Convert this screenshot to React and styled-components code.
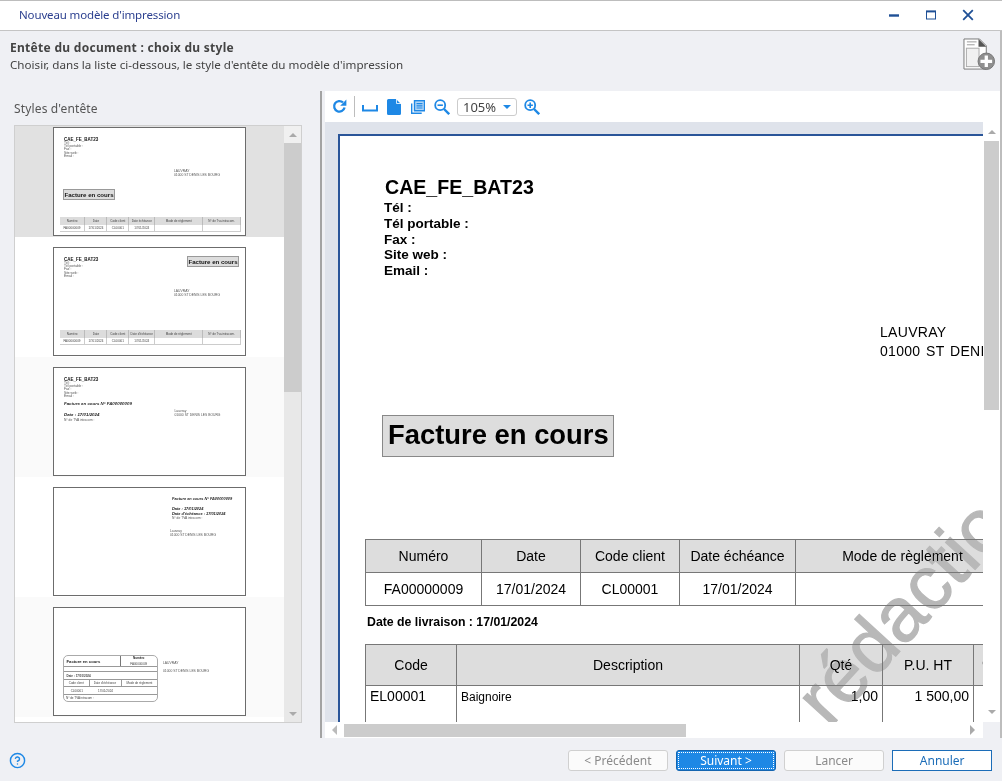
import React from 'react';
import styled, { createGlobalStyle } from 'styled-components';
import { CircleHelp } from 'lucide-react';

const UI = '"Noto Sans", "Liberation Sans", sans-serif';
const DOC = '"Liberation Sans", Arial, sans-serif';
const BLUE = '#1e88e5';

const Global = createGlobalStyle`
  html, body { margin: 0; padding: 0; background: #fff; overflow: hidden; }
  * { box-sizing: border-box; }
`;

const Window = styled.div`
  width: 1003px; height: 781px; display: flex; flex-direction: column;
  font-family: ${UI}; font-size: 12px; color: #444; background: #eff0f4;
  border-right: 1px solid #fff; overflow: hidden;
`;
const TitleBar = styled.div`
  height: 31px; flex: none; display: flex; align-items: center; background: #fff;
  border-top: 1px solid #bdbdbd; border-bottom: 1px solid #c4c4c4; padding-left: 19px;
`;
const TitleText = styled.span`
  color: #2b3f8f; font-size: 11.5px; letter-spacing: -0.14px; flex: 1; margin-top: -3px;
`;
const WinControls = styled.div`
  display: flex; align-items: center; margin-right: 28px;
`;
const WinIcon = styled.svg`
  width: 12px; height: 12px; margin-left: 25px; display: block; margin-top: -1px;
`;
const Header = styled.div`
  height: 60px; flex: none; display: flex; justify-content: space-between; padding: 8px 4px 0 10px;
  border-right: 2px solid #bdbdbd;
`;
const HeaderTitle = styled.div` font-weight: 700; font-size: 12px; letter-spacing: .29px; line-height: 18px; color: #444; `;
const HeaderSub = styled.div` font-size: 11.65px; line-height: 18px; margin-top: -1px; color: #444; `;
const HeaderIcon = styled.svg` display: block; margin-top: -1px; flex: none; `;
const Main = styled.div` flex: 1; min-height: 0; display: flex; border-right: 2px solid #bdbdbd; `;
const LeftPane = styled.div` width: 320px; flex: none; padding: 9px 0 0 14px; display: flex; flex-direction: column; `;
const PaneLabel = styled.div` font-size: 12px; letter-spacing: .15px; line-height: 18px; color: #555; margin-bottom: 7px; `;
const ListBox = styled.div`
  width: 288px; height: 598px; border: 1px solid #cfcfcf; display: flex; background: #fff; flex: none;
`;
const ListItems = styled.div` flex: 1; overflow: hidden; `;
const ListStack = styled.div` margin-top: -9px; `;
const Item = styled.div`
  height: 120px; padding-top: 10px; display: flex; justify-content: center;
  background: ${p => p.$selected ? '#e1e1e1' : p.$alt ? '#fafafa' : '#fff'};
`;
const Thumb = styled.div`
  width: 193px; height: 109px; background: #fff; border: 1px solid #6c6c6c; overflow: hidden;
  font-family: ${DOC}; color: #333; display: flex; flex-direction: column;
`;
const ThumbInner = styled.div` filter: blur(0.5px); display: flex; flex-direction: column; flex: 1; `;
const MiniHead = styled.div` margin-left: 10px; flex: none; `;
const MiniTitle = styled.div` margin-top: 8.5px; font-size: 4.5px; font-weight: 700; line-height: 5px; color: #111; `;
const MiniLine = styled.div` font-size: 3.3px; line-height: 3.4px; color: #555; `;
const MiniRow = styled.div` display: flex; `;
const MiniAddress = styled.div`
  margin-left: ${p => p.$left}px; margin-top: ${p => p.$top}px; font-size: 3.35px; line-height: ${p => p.$lh || 4.2}px; color: #555; white-space: nowrap;
`;
const MiniBox = styled.div`
  margin-top: ${p => p.$top}px; margin-left: ${p => p.$left}px; width: 52px; height: 11px; background: #ddd; border: 0.7px solid #999; flex: none;
  font-size: 6.1px; font-weight: 700; line-height: 9.5px; text-align: center; color: #111; white-space: nowrap;
`;
const CornerBox = styled(MiniBox)` margin-left: auto; margin-right: 6px; `;
const MiniTable = styled.div`
  margin-top: ${p => p.$top}px; margin-left: 5.5px; width: 181.5px; display: grid;
  grid-template-columns: 26fr 22fr 22fr 26fr 48fr 38fr; font-size: 3px; color: #444; text-align: center;
`;
const MiniHeadCell = styled.div` background: #dcdcdc; height: 8px; line-height: 8px; border-right: .5px solid #bbb; white-space: nowrap; overflow: hidden; `;
const MiniCell = styled.div` height: 7px; line-height: 6.5px; border-right: .5px solid #ccc; border-bottom: .5px solid #ccc; white-space: nowrap; `;
const MiniItalic = styled.div`
  margin-top: ${p => p.$top}px; margin-left: ${p => p.$left}px; font-size: ${p => p.$size || 4.4}px; line-height: 5px;
  font-weight: 700; font-style: italic; color: #222; white-space: nowrap;
`;
const MiniVat = styled.div`
  margin-top: ${p => p.$top}px; margin-left: ${p => p.$left}px; font-size: 3.3px; line-height: 3.5px; color: #555; white-space: nowrap;
`;
const MiniCard = styled.div`
  margin: 47px 0 0 9px; width: 94.5px; height: 47px; border: .8px solid #aaa; border-radius: 5px; overflow: hidden; flex: none;
  display: flex; flex-direction: column; font-size: 3px; color: #444;
`;
const CardRow = styled.div`
  height: ${p => p.$h}px; flex: none; display: flex; border-bottom: .7px solid #999; line-height: ${p => p.$h}px; padding-left: ${p => p.$pad || 0}px; font-weight: ${p => p.$bold ? 700 : 400}; white-space: nowrap;
`;
const CardCell = styled.div`
  width: ${p => p.$w}px; flex: none; text-align: center; border-right: ${p => p.$line ? '.7px solid #999' : '0'};
`;
const CardTitle = styled.div` width: 57px; flex: none; font-size: 4.2px; font-weight: 700; color: #222; padding-left: 2.5px; border-right: .7px solid #777; `;
const CardNum = styled.div` flex: 1; text-align: center; display: flex; flex-direction: column; line-height: 5.5px; `;
const CardNumHead = styled.b` color: #222; `;
const ScrollV = styled.div`
  width: ${p => p.$w || 17}px; flex: none; background: ${p => p.$track}; display: flex; flex-direction: column; align-items: center;
`;
const ScrollBtn = styled.div`
  height: ${p => p.$h || 17}px; width: ${p => p.$w || '100%'}; flex: none; display: flex; align-items: center; justify-content: center; background: ${p => p.$bg || 'transparent'};
`;
const ArrowUp = styled.div` width: 0; height: 0; border: 4px solid transparent; border-top: 0; border-bottom: 4px solid #aaa; `;
const ArrowDown = styled.div` width: 0; height: 0; border: 4px solid transparent; border-bottom: 0; border-top: 4px solid #aaa; `;
const ArrowLeft = styled.div` width: 0; height: 0; border: 5px solid transparent; border-left: 0; border-right: 5px solid #bbb; `;
const ArrowRight = styled.div` width: 0; height: 0; border: 5px solid transparent; border-right: 0; border-left: 5px solid #aaa; `;
const ThumbV = styled.div` height: ${p => p.$h}px; width: ${p => p.$w || '100%'}; background: #ccc; flex: none; `;
const Spacer = styled.div` flex: 1; `;
const Splitter = styled.div` width: 2px; flex: none; background: #a3a3a3; `;
const RightPane = styled.div` flex: 1; min-width: 0; margin-left: 3px; display: flex; flex-direction: column; `;
const Toolbar = styled.div`
  height: 31px; flex: none; background: #fff; display: flex; align-items: center; padding-left: 7px;
`;
const ToolIcon = styled.svg`
  display: block; flex: none; margin-left: ${p => p.$gap || 0}px; margin-top: ${p => p.$drop || 0}px; color: ${BLUE};
`;
const ToolSep = styled.div` width: 1px; height: 21px; background: #bdbdbd; margin-left: 7px; `;
const Combo = styled.div`
  width: 60px; height: 18px; margin-left: 7px; border: 1px solid #ccc; border-radius: 3px; display: flex; align-items: center; justify-content: space-between;
  padding: 0 5px; font-size: 13px; color: #444; flex: none; background: #fff;
`;
const ComboArrow = styled.div` width: 0; height: 0; border: 4px solid transparent; border-bottom: 0; border-top: 4px solid ${BLUE}; `;
const PreviewGrid = styled.div`
  flex: 1; min-height: 0; display: grid; grid-template-columns: 658px 17px; grid-template-rows: 600px 16px; background: #fff;
`;
const Canvas = styled.div` background: #dfe3eb; overflow: hidden; padding: 12px 0 0 13px; `;
const Page = styled.div`
  position: relative; width: 860px; height: 900px; background: #fff; border-top: 2px solid #2a5599; border-left: 2px solid #2a5599; font-family: ${DOC}; color: #000; padding-left: 44px;
`;
const DocTitle = styled.div` margin-top: 40px; margin-left: 1px; font-size: 19.6px; font-weight: 700; line-height: 22px; `;
const DocInfo = styled.div` font-size: 13.5px; font-weight: 700; line-height: 15.75px; margin-top: 2px; `;
const DocAddress = styled.div` margin: 44.5px 0 0 496px; font-size: 14px; letter-spacing: .3px; word-spacing: 1.5px; line-height: 19px; white-space: nowrap; `;
const DocBadge = styled.div`
  margin: 54px 0 0 -2px; width: 232px; height: 42px; background: #ddd; border: 1px solid #888; font-size: 27.4px; font-weight: 700; line-height: 38px; padding-left: 5px; white-space: nowrap;
`;
const DocTable = styled.table`
  margin: ${p => p.$top}px 0 0 -19px; border-collapse: collapse; table-layout: fixed; font-size: 14px;
  width: ${p => p.$width}px;
`;
const Th = styled.th`
  background: #ddd; border: 1px solid #777; font-weight: 400; height: ${p => p.$h}px; padding: 0; white-space: nowrap;
`;
const Td = styled.td`
  border: 1px solid #777; height: ${p => p.$h}px; padding: ${p => p.$pad || '0'}; text-align: ${p => p.$align || 'center'}; vertical-align: ${p => p.$valign || 'middle'}; font-size: ${p => p.$size || 14}px; white-space: nowrap;
`;
const Delivery = styled.div` margin: 8px 0 0 -17px; font-size: 12.3px; font-weight: 700; line-height: 16px; `;
const Watermark = styled.div`
  position: absolute; left: 498px; top: 525px; transform: rotate(-47.5deg); transform-origin: 0 100%;
  font-size: 76px; line-height: 76px; color: #b8b8b8; mix-blend-mode: darken; -webkit-text-stroke: 1.2px #b8b8b8; white-space: nowrap; pointer-events: none;
`;
const ScrollH = styled.div` background: #fff; display: flex; align-items: center; `;
const Corner = styled.div` background: #eff0f4; `;
const Footer = styled.div`
  height: 43px; flex: none; display: flex; align-items: center; padding: 1px 10px 0 9px; gap: 8.5px;
`;
const Btn = styled.button`
  width: 99.6px; height: 21px; padding: 0; font-family: ${UI}; font-size: 12px; border-radius: 3px; cursor: default;
  background: ${p => p.$primary ? BLUE : '#fbfbfb'};
  color: ${p => p.$primary ? '#fff' : p.$cancel ? '#1c6db8' : '#8a8a8a'};
  border: 1px solid ${p => p.$primary ? '#1565b0' : p.$cancel ? '#1c6db8' : '#d0d0d0'};
  outline: ${p => p.$primary ? '1px dotted #fff' : 'none'}; outline-offset: -3px;
  ${p => p.$cancel ? 'background:#fff; border-width: 1px 1.5px 1.5px 1px; border-radius: 0;' : ''}
`;

const Head = () => (
  <MiniHead>
    <MiniTitle>CAE_FE_BAT23</MiniTitle>
    <MiniLine>Tél :</MiniLine>
    <MiniLine>Tél portable :</MiniLine>
    <MiniLine>Fax :</MiniLine>
    <MiniLine>Site web :</MiniLine>
    <MiniLine>Email :</MiniLine>
  </MiniHead>
);
const Addr = ({ left, top, lh, low }) => (
  <MiniAddress $left={left} $top={top} $lh={lh}>
    {low ? 'Lauvray' : 'LAUVRAY'}<br />01000 ST DENIS LES BOURG
  </MiniAddress>
);
const Tbl = ({ top, narrow }) => (
  <MiniTable $top={top}>
    {['Numéro', 'Date', 'Code client', narrow ? "Date d'échéance" : 'Date échéance', 'Mode de règlement', 'N° de Tva intracom.'].map(t => <MiniHeadCell key={t}>{t}</MiniHeadCell>)}
    {['FA00000009', '17/01/2024', 'CL00001', '17/01/2024', '', ''].map((t, i) => <MiniCell key={i}>{t}</MiniCell>)}
  </MiniTable>
);

const Page1 = () => (<ThumbInner><Head /><Addr left={120} top={10.4} /><MiniBox $top={11.6} $left={9}>Facture en cours</MiniBox><Tbl top={17} /></ThumbInner>);
const Page2 = () => (
  <ThumbInner>
    <MiniRow><Head /><CornerBox $top={8}>Facture en cours</CornerBox></MiniRow>
    <Addr left={120} top={10.4} />
    <Tbl top={32.6} narrow />
  </ThumbInner>
);
const Page3 = () => (
  <ThumbInner>
    <Head />
    <MiniItalic $top={2.2} $left={10}>Facture en cours N° FA00000009</MiniItalic>
    <MiniRow>
      <div>
        <MiniItalic $top={6.4} $left={10}>Date : 17/01/2024</MiniItalic>
        <MiniVat $top={1.8} $left={10}>N° de TVA intracom :</MiniVat>
      </div>
      <Addr left={75} top={3.2} low />
    </MiniRow>
  </ThumbInner>
);
const Page4 = () => (
  <ThumbInner>
    <MiniItalic $top={7.8} $left={118} $size={3.9}>Facture en cours N° FA00000009</MiniItalic>
    <MiniItalic $top={5.7} $left={118} $size={3.9}>Date : 17/01/2024</MiniItalic>
    <MiniItalic $top={0} $left={118} $size={3.9}>Date d'échéance : 17/01/2024</MiniItalic>
    <MiniVat $top={1} $left={118}>N° de TVA intracom :</MiniVat>
    <Addr left={116} top={8} low />
  </ThumbInner>
);
const Page5 = () => (
  <ThumbInner>
    <MiniRow>
      <MiniCard>
        <CardRow $h={11}>
          <CardTitle>Facture en cours</CardTitle>
          <CardNum><CardNumHead>Numéro</CardNumHead><span>FA00000009</span></CardNum>
        </CardRow>
        <CardRow $h={5} />
        <CardRow $h={8} $pad={2.5} $bold>Date : 17/01/2024</CardRow>
        <CardRow $h={7}>
          <CardCell $w={25.5} $line>Code client</CardCell>
          <CardCell $w={32} $line>Date d'échéance</CardCell>
          <CardCell $w={36}>Mode de règlement</CardCell>
        </CardRow>
        <CardRow $h={8}>
          <CardCell $w={25.5}>CL00001</CardCell>
          <CardCell $w={32}>17/01/2024</CardCell>
        </CardRow>
        <CardRow $h={7} $pad={2}>N° de TVA intracom :</CardRow>
      </MiniCard>
      <MiniAddress $left={5.5} $top={52} $lh={7.7}>LAUVRAY<br />01000 ST DENIS LES BOURG</MiniAddress>
    </MiniRow>
  </ThumbInner>
);

const DocIcon = () => (
  <HeaderIcon width="33" height="33" viewBox="0 0 34 34" fill="none">
    <path d="M1 1h16l7 7v24H1z" fill="#fff" stroke="#777" strokeWidth="1" />
    <path d="M16 1l8 8h-8z" fill="#555" />
    <path d="M4 4h10M4 7h8" stroke="#999" strokeWidth="1" />
    <rect x="3.5" y="10.5" width="13" height="19" fill="#f1f1f1" stroke="#aaa" />
    <circle cx="24" cy="24" r="8.5" fill="#8f8f8f" stroke="#777" />
    <path d="M24 18v12M18 24h12" stroke="#fff" strokeWidth="3.4" />
  </HeaderIcon>
);

export default function App() {
  return (
    <Window>
      <Global />
      <TitleBar>
        <TitleText>Nouveau modèle d'impression</TitleText>
        <WinControls>
          <WinIcon viewBox="0 0 12 12"><path d="M1 6.5h10" stroke="#1f5096" strokeWidth="2.4" /></WinIcon>
          <WinIcon viewBox="0 0 12 12"><rect x="1.5" y="2" width="9" height="8" fill="none" stroke="#1f5096" /><path d="M1 2.6h10" stroke="#1f5096" strokeWidth="1.6" /></WinIcon>
          <WinIcon viewBox="0 0 12 12"><path d="M1.2 1.2l9.6 9.6M10.8 1.2l-9.6 9.6" stroke="#1f5096" strokeWidth="1.8" /></WinIcon>
        </WinControls>
      </TitleBar>
      <Header>
        <div>
          <HeaderTitle>Entête du document : choix du style</HeaderTitle>
          <HeaderSub>Choisir, dans la liste ci-dessous, le style d'entête du modèle d'impression</HeaderSub>
        </div>
        <DocIcon />
      </Header>
      <Main>
        <LeftPane>
          <PaneLabel>Styles d'entête</PaneLabel>
          <ListBox>
            <ListItems>
              <ListStack>
                <Item $selected><Thumb><Page1 /></Thumb></Item>
                <Item><Thumb><Page2 /></Thumb></Item>
                <Item $alt><Thumb><Page3 /></Thumb></Item>
                <Item><Thumb><Page4 /></Thumb></Item>
                <Item $alt><Thumb><Page5 /></Thumb></Item>
              </ListStack>
            </ListItems>
            <ScrollV $track="#e8e8e8">
              <ScrollBtn $bg="#f0f0f0"><ArrowUp /></ScrollBtn>
              <ThumbV $h={249} />
              <Spacer />
              <ScrollBtn><ArrowDown /></ScrollBtn>
            </ScrollV>
          </ListBox>
        </LeftPane>
        <Splitter />
        <RightPane>
          <Toolbar>
            <ToolIcon width="15" height="15" viewBox="0 0 15 15" fill="none"><path d="M12.6 8.6A5.3 5.3 0 1 1 11 3.4" stroke="currentColor" strokeWidth="2.3" /><path d="M14.4 0.6v6.2H8.2z" fill="currentColor" /></ToolIcon>
            <ToolSep />
            <ToolIcon $gap={7} $drop={2} width="16" height="8" viewBox="0 0 16 8" fill="none"><path d="M1 1v5.5h14V1" stroke="currentColor" strokeWidth="2" /></ToolIcon>
            <ToolIcon $gap={9} width="14" height="16" viewBox="0 0 14 16"><path d="M1.5 0H9l5 5v9.5a1.5 1.5 0 0 1-1.5 1.5h-11A1.5 1.5 0 0 1 0 14.5v-13A1.5 1.5 0 0 1 1.5 0z" fill="currentColor" /><path d="M9.5 0v4.5H14" fill="none" stroke="#fff" strokeWidth=".8" /></ToolIcon>
            <ToolIcon $gap={10} width="14" height="14" viewBox="0 0 14 14" fill="none"><rect x="3" y=".5" width="11" height="11" fill="currentColor" opacity=".35" /><rect x="3.5" y=".7" width="10" height="10" fill="none" stroke="currentColor" strokeWidth="1.4" /><path d="M.7 3.5v9.8h10" stroke="currentColor" strokeWidth="1.4" /><path d="M5.5 3.6h6M5.5 5.8h6M5.5 8h6" stroke="currentColor" strokeWidth="1.2" /></ToolIcon>
            <ToolIcon $gap={9} width="16" height="16" viewBox="0 0 16 16" fill="none"><circle cx="6.2" cy="6.2" r="5" stroke="currentColor" strokeWidth="1.8" /><path d="M10 10l5.2 5.2" stroke="currentColor" strokeWidth="2.4" /><path d="M3.5 6.2h5.4" stroke="currentColor" strokeWidth="1.6" /></ToolIcon>
            <Combo>105%<ComboArrow /></Combo>
            <ToolIcon $gap={7} width="16" height="16" viewBox="0 0 16 16" fill="none"><circle cx="6.2" cy="6.2" r="5" stroke="currentColor" strokeWidth="1.8" /><path d="M10 10l5.2 5.2" stroke="currentColor" strokeWidth="2.4" /><path d="M3.5 6.2h5.4M6.2 3.5v5.4" stroke="currentColor" strokeWidth="1.6" /></ToolIcon>
          </Toolbar>
          <PreviewGrid>
            <Canvas>
              <Page>
                <DocTitle>CAE_FE_BAT23</DocTitle>
                <DocInfo>Tél :<br />Tél portable :<br />Fax :<br />Site web :<br />Email :</DocInfo>
                <DocAddress>LAUVRAY<br />01000 ST DENIS LES BOURG</DocAddress>
                <DocBadge>Facture en cours</DocBadge>
                <DocTable $top={82} $width={744}>
                  <colgroup><col width="116" /><col width="99" /><col width="99" /><col width="116" /><col width="214" /><col width="100" /></colgroup>
                  <thead><tr><Th $h={33}>Numéro</Th><Th $h={33}>Date</Th><Th $h={33}>Code client</Th><Th $h={33}>Date échéance</Th><Th $h={33}>Mode de règlement</Th><Th $h={33}>N° de TVA</Th></tr></thead>
                  <tbody><tr><Td $h={33}>FA00000009</Td><Td $h={33}>17/01/2024</Td><Td $h={33}>CL00001</Td><Td $h={33}>17/01/2024</Td><Td $h={33} /><Td $h={33} /></tr></tbody>
                </DocTable>
                <Delivery>Date de livraison : 17/01/2024</Delivery>
                <DocTable $top={14} $width={668}>
                  <colgroup><col width="91" /><col width="343" /><col width="83" /><col width="91" /><col width="60" /></colgroup>
                  <thead><tr><Th $h={41}>Code</Th><Th $h={41}>Description</Th><Th $h={41}>Qté</Th><Th $h={41}>P.U. HT</Th><Th $h={41}>% TVA</Th></tr></thead>
                  <tbody><tr>
                    <Td $h={90} $align="left" $valign="top" $pad="2px 4px">EL00001</Td>
                    <Td $h={90} $align="left" $valign="top" $pad="4px 4px" $size={12}>Baignoire</Td>
                    <Td $h={90} $align="right" $valign="top" $pad="2px 4px">1,00</Td>
                    <Td $h={90} $align="right" $valign="top" $pad="2px 4px">1 500,00</Td>
                    <Td $h={90} />
                  </tr></tbody>
                </DocTable>
                <Watermark>rédaction</Watermark>
              </Page>
            </Canvas>
            <ScrollV $track="#fff">
              <ScrollBtn $h={19}><ArrowUp /></ScrollBtn>
              <ThumbV $h={269} $w="15px" />
              <Spacer />
              <ScrollBtn $h={20}><ArrowDown /></ScrollBtn>
            </ScrollV>
            <ScrollH>
              <ScrollBtn $h={16} $w="19px"><ArrowLeft /></ScrollBtn>
              <ThumbV $h={13} $w="342px" />
              <Spacer />
              <ScrollBtn $h={16} $w="22px"><ArrowRight /></ScrollBtn>
            </ScrollH>
            <Corner />
          </PreviewGrid>
        </RightPane>
      </Main>
      <Footer>
        <CircleHelp size={17} color={BLUE} strokeWidth={2} />
        <Spacer />
        <Btn disabled>&lt; Précédent</Btn>
        <Btn $primary>Suivant &gt;</Btn>
        <Btn disabled>Lancer</Btn>
        <Btn $cancel>Annuler</Btn>
      </Footer>
    </Window>
  );
}
